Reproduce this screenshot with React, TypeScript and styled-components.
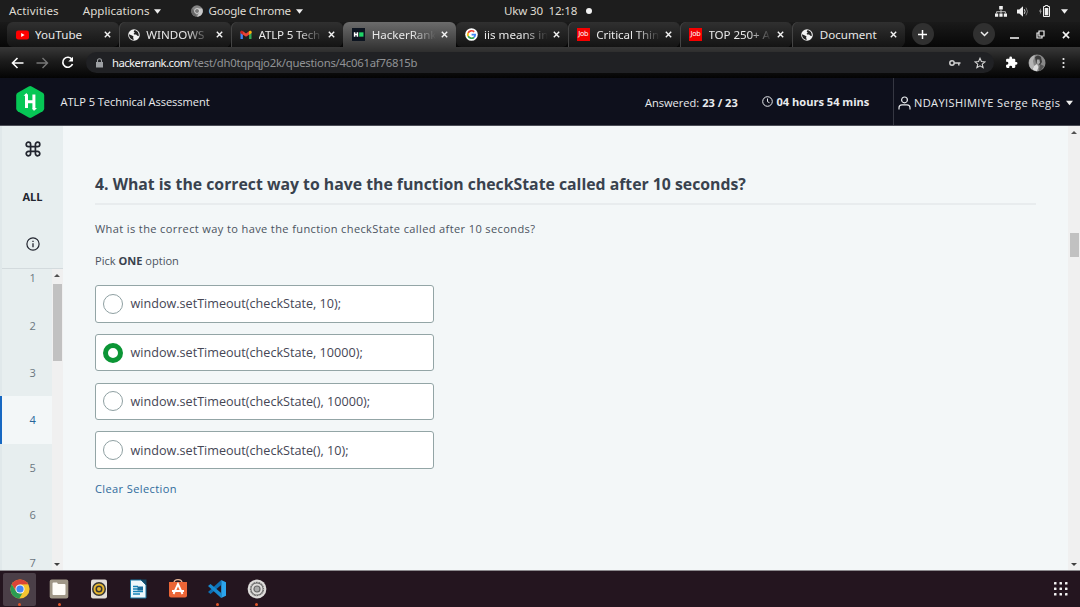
import React from "react";
import styled, { createGlobalStyle, css } from "styled-components";

const GlobalStyle = createGlobalStyle`
  * { box-sizing: border-box; }
  body { margin: 0; overflow: hidden; background: #f3f7f8; }
  svg { display: block; flex: none; }
`;

const Desktop = styled.div`
  width: 1080px;
  height: 607px;
  display: flex;
  flex-direction: column;
  overflow: hidden;
  font-family: "Open Sans", "Noto Sans", sans-serif;
`;

/* ---------- system top bar ---------- */
const TopBar = styled.div`
  height: 22px;
  flex: none;
  display: grid;
  grid-template-columns: 504px 1fr auto;
  align-items: center;
  background: #1d1d1d;
  color: #dfdbd2;
  font: 11.6px/22px "Noto Sans", sans-serif;
  white-space: pre;
`;
const MenuGroup = styled.div`
  display: flex;
  align-items: center;
  padding-left: 9px;
`;
const MenuItem = styled.div<{ $left?: number; $spacing?: number }>`
  display: flex;
  align-items: center;
  gap: 5px;
  height: 22px;
  margin-left: ${(p) => p.$left ?? 0}px;
  letter-spacing: ${(p) => p.$spacing ?? 0}px;
`;
const Clock = styled.div`
  display: flex;
  align-items: center;
  gap: 9px;
  letter-spacing: -0.2px;
  height: 20px;
`;
const Dot = styled.span`
  width: 6px;
  height: 6px;
  border-radius: 50%;
  background: #f2f2f2;
`;
const StatusIcons = styled.div`
  display: flex;
  align-items: center;
  gap: 10px;
  height: 20px;
  padding-right: 12px;
`;

/* ---------- browser tabs ---------- */
const TabStrip = styled.div`
  height: 25px;
  flex: none;
  display: flex;
  padding-left: 6.5px;
  background: linear-gradient(#1a1a1a, #070707);
`;
const TabItem = styled.div<{ $active?: boolean }>`
  width: 112.25px;
  flex: none;
  height: 25px;
  padding: 0 8px 0 9px;
  display: flex;
  align-items: center;
  color: #e8e8e8;
  border-radius: 6px;
  background: linear-gradient(#303030, #141414);
  & + & {
    box-shadow: inset 1px 0 #444;
    border-radius: 6px 6px 6px 0;
  }
  ${(p) =>
    p.$active &&
    css`
      &&& {
        background: linear-gradient(#6c6c6c, #383838);
        border-radius: 6px 6px 0 0;
        box-shadow: none;
      }
      &&& + div {
        border-radius: 6px;
        box-shadow: none;
      }
    `}
`;
const TabTitle = styled.span<{ $fade?: boolean; $spacing?: number }>`
  flex: 1;
  margin: 0 5px 0 6.5px;
  overflow: hidden;
  white-space: nowrap;
  font: 11.6px/24px "Noto Sans", sans-serif;
  letter-spacing: ${(p) => p.$spacing ?? 0}px;
  ${(p) =>
    p.$fade &&
    css`
      mask-image: linear-gradient(90deg, #000 62%, transparent 100%);
    `}
`;
const RoundButton = styled.div<{ $left: number }>`
  width: 22px;
  height: 22px;
  margin: 1px 0 0 ${(p) => p.$left}px;
  border-radius: 50%;
  display: grid;
  place-items: center;
  background: #303030;
`;
const WindowButtons = styled.div`
  display: flex;
  align-items: center;
  gap: 17px;
  margin-left: 15px;
  height: 25px;
`;

/* ---------- address bar ---------- */
const Toolbar = styled.div`
  height: 31px;
  flex: none;
  display: flex;
  align-items: center;
  padding: 0 9px 0 11px;
  background: linear-gradient(#383838, #1c1c1c 45%, #040404);
`;
const NavButtons = styled.div`
  display: flex;
  align-items: center;
  gap: 12px;
  width: 75px;
`;
const Omnibox = styled.div`
  width: 908px;
  height: 21px;
  border-radius: 11px;
  padding: 0 8px 0 9px;
  display: flex;
  align-items: center;
  background: #202124;
`;
const Url = styled.div`
  flex: 1;
  margin-left: 8px;
  color: #919396;
  font: 11.3px/20px "Noto Sans", sans-serif;
  letter-spacing: -0.23px;
  b { color: #f1f1f1; font-weight: 400; letter-spacing: -0.55px; }
`;
const OmniIcons = styled.div`
  display: flex;
  align-items: center;
  gap: 13px;
`;
const ExtIcons = styled.div`
  flex: 1;
  display: flex;
  align-items: center;
  padding-left: 11px;
  gap: 10px;
`;

/* ---------- assessment header ---------- */
const SiteHeader = styled.div`
  height: 48px;
  flex: none;
  display: flex;
  align-items: center;
  padding-left: 15px;
  background: #0e101c;
  border-bottom: 1px solid #4b4d56;
  color: #e9ebee;
  font-size: 11.07px;
  white-space: nowrap;
`;
const HeaderTitle = styled.div`
  margin-left: 15.5px;
  width: 584.5px;
  letter-spacing: -0.04px;
`;
const Answered = styled.div`
  width: 116.5px;
  padding-top: 1px;
  b { font-weight: 700; }
`;
const TimeLeft = styled.div`
  width: 131.5px;
  display: flex;
  align-items: center;
  gap: 4px;
  font-weight: 700;
`;
const UserMenu = styled.div`
  flex: 1;
  height: 47px;
  display: flex;
  align-items: center;
  padding: 2px 0 0 4px;
  border-left: 1px solid #353742;
  span { width: 152px; margin-left: 3px; letter-spacing: 0.38px; }
`;

/* ---------- page ---------- */
const Page = styled.div`
  flex: 1;
  min-height: 0;
  display: flex;
  background: #f3f7f8;
`;
const Sidebar = styled.div`
  width: 63px;
  display: flex;
  flex-direction: column;
  background: #e7eeef;
  border-left: 2px solid #e0e8ea;
`;
const SideTools = styled.div`
  height: 143px;
  flex: none;
  display: flex;
  flex-direction: column;
  align-items: center;
  color: #22252f;
  border-bottom: 1px solid #d3dadd;
`;
const SideTool = styled.div<{ $height: number }>`
  height: ${(p) => p.$height}px;
  display: grid;
  place-items: center;
  font-size: 11.07px;
  font-weight: 700;
`;
const QuestionNav = styled.div`
  flex: 1;
  min-height: 0;
  display: flex;
  margin-left: -2px;
`;
const NumberList = styled.div`
  width: 51.5px;
  overflow: hidden;
`;
const NumberItem = styled.div<{ $active?: boolean; $first?: boolean }>`
  height: 47.4px;
  margin-top: ${(p) => (p.$first ? -14.9 : 0)}px;
  padding-left: 12px;
  display: grid;
  place-items: center;
  font-size: 11.07px;
  color: #6b767f;
  border-left: 2px solid #e0e8ea;
  ${(p) =>
    p.$active &&
    css`
      background: #f3f7f8;
      border-left-color: #1768c2;
      color: #26659a;
    `}
`;
const Scrollbar = styled.div<{ $width: number; $gap: number; $thumb: number }>`
  width: ${(p) => p.$width}px;
  flex: none;
  display: flex;
  flex-direction: column;
  align-items: center;
  padding: 5px 0 4px;
  background: #f0f0f0;
  &::before {
    content: "";
    border: 3px solid transparent;
    border-top-width: 0;
    border-bottom-color: #505050;
  }
  i {
    width: 9px;
    height: ${(p) => p.$thumb}px;
    margin-top: ${(p) => p.$gap}px;
    background: #c1c1c1;
  }
  &::after {
    content: "";
    margin-top: auto;
    border: 3px solid transparent;
    border-bottom-width: 0;
    border-top-color: #404040;
  }
`;

const Question = styled.main`
  flex: 1;
  padding: 46px 31px 0 32px;
  color: #39424e;
`;
const QuestionTitle = styled.h1`
  margin: 0;
  height: 33px;
  width: 941px;
  border-bottom: 2px solid #e8ecee;
  font-size: 15.8px;
  line-height: 25px;
  font-weight: 700;
  white-space: nowrap;
`;
const Paragraph = styled.p<{ $top: number; $spacing?: number }>`
  margin: ${(p) => p.$top}px 0 0;
  font-size: 11.07px;
  letter-spacing: ${(p) => p.$spacing ?? 0}px;
  line-height: 18px;
  color: #4b5360;
  b { color: #39424e; }
`;
const Options = styled.div`
  margin-top: 15px;
  display: flex;
  flex-direction: column;
  gap: 11.3px;
  width: 339px;
`;
const Option = styled.label`
  height: 37.5px;
  display: flex;
  align-items: center;
  gap: 7.5px;
  padding-left: 7px;
  border: 1px solid #93a5a6;
  border-radius: 3px;
  background: #fff;
  font-size: 12.62px;
  color: #454655;
`;
const Radio = styled.span<{ $checked?: boolean }>`
  width: 20px;
  height: 20px;
  flex: none;
  border-radius: 50%;
  background: #fff;
  border: ${(p) => (p.$checked ? "5.5px solid #0b9535" : "1px solid #8fa0a2")};
`;
const ClearLink = styled.a`
  display: block;
  margin-top: 11px;
  font-size: 11.07px;
  letter-spacing: 0.37px;
  line-height: 18px;
  color: #2f6b9c;
`;

/* ---------- dock ---------- */
const Dock = styled.div`
  height: 37px;
  flex: none;
  display: flex;
  align-items: center;
  padding: 0 12px 0 3px;
  background: #24151f;
  border-top: 1px solid #8d8a8e;
`;
const DockItem = styled.div<{ $active?: boolean; $running?: boolean }>`
  width: 33px;
  height: 33px;
  margin-right: 6.5px;
  padding-top: 6px;
  display: flex;
  flex-direction: column;
  align-items: center;
  gap: 4px;
  border-radius: 2px;
  background: ${(p) => (p.$active ? "#4b3f48" : "transparent")};
  &::after {
    content: "";
    width: 3px;
    height: 3px;
    border-radius: 50%;
    background: ${(p) => (p.$running ? "#e2562a" : "transparent")};
  }
`;
const GridButton = styled.div`
  margin-left: auto;
`;

/* ---------- drawings ---------- */
const Caret = ({ w = 7, h = 5 }: { w?: number; h?: number }) => (
  <svg width={w} height={h} viewBox="0 0 7 5"><path d="M0 0.3h7L3.5 4.8z" fill="#eee" /></svg>
);
const CloseIcon = ({ size = 7 }: { size?: number }) => (
  <svg width={size} height={size} viewBox="0 0 7 7"><path d="M.8.8l5.4 5.4M6.2.8L.8 6.2" stroke="#f4f4f4" strokeWidth="1.4" /></svg>
);
const ChromeMono = () => (
  <svg width="12" height="12" viewBox="0 0 12 12">
    <circle cx="6" cy="6" r="5.8" fill="#858585" />
    <path d="M6 3.4h5.2A5.8 5.8 0 0 1 6 11.8L8.4 7z" fill="#c9c9c9" />
    <path d="M1 3.2L3.6 7 6 11.8A5.8 5.8 0 0 1 1 3.2z" fill="#686868" />
    <circle cx="6" cy="6" r="2.7" fill="#ddd" /><circle cx="6" cy="6" r="2" fill="#777" />
  </svg>
);
const NetworkIcon = () => (
  <svg width="12" height="11" viewBox="0 0 12 11" fill="#f0f0f0">
    <path d="M4.2 0h3.6v3.6H4.2zM0 7.5h3.2v3.2H0zM4.4 7.5h3.2v3.2H4.4zM8.8 7.5H12v3.2H8.8z" />
    <path d="M6 3.5v4M1.6 7.6V5.7h8.8v1.9" stroke="#d0d0d0" strokeWidth=".9" fill="none" />
  </svg>
);
const VolumeIcon = () => (
  <svg width="12" height="11" viewBox="0 0 12 11">
    <path d="M0 3.5h2.3L6 .3v10.4L2.3 7.5H0z" fill="#f0f0f0" />
    <path d="M7.3 3.2q1.5 2.3 0 4.6" stroke="#ddd" fill="none" /><path d="M9 1.6q3 3.9 0 7.8" stroke="#777" fill="none" />
  </svg>
);
const BatteryIcon = () => (
  <svg width="12" height="12" viewBox="0 0 12 12">
    <path d="M2 3L0 6.5h1.3L.8 9.5 2.8 5.700H1.500z" fill="#aaa" />
    <path d="M4.500 1.500h1.700V.5h2.600v1h1.700v10h-6z" fill="none" stroke="#eee" /><path d="M5.700 3h3.600v7.300H5.700z" fill="#eee" />
  </svg>
);
const YouTubeIcon = () => (
  <svg width="13" height="12" viewBox="0 0 13 12"><rect y="1.5" width="13" height="9" rx="2.2" fill="#f00" /><path d="M5.2 4v4l3.4-2z" fill="#fff" /></svg>
);
const GlobeIcon = () => (
  <svg width="12" height="12" viewBox="0 0 12 12">
    <circle cx="6" cy="6" r="5.8" fill="#f3f3f3" />
    <path d="M1 5.2l3 1.2 1.5 1.2-.4 1.2 .8 1.9C3 10.8 1 8.5 1 5.2zM6.3 1.2l-.6 1.5 1.1.8-1.2 1.2.5.9h2l1.2 1.2 1.5.1C11 3.5 9 1.2 6.3 1.2z" fill="#222" />
  </svg>
);
const GmailIcon = () => (
  <svg width="12" height="12" viewBox="0 0 12 12">
    <path d="M.5 3v7h2.4V5z" fill="#4285f4" /><path d="M11.5 3v7H9.1V5z" fill="#34a853" />
    <path d="M.5 2.7Q1.5 1 3 2.2l3 2.3 3-2.3q1.5-1.2 2.5.5V4L6 7.8.5 4z" fill="#ea4335" />
    <path d="M9.1 2.1q2.4-1 2.4 1V4L9.1 5.8z" fill="#fbbc04" /><path d="M.5 3.2q0-2 2.4-1.1v3.7L.5 4z" fill="#c5221f" />
  </svg>
);
const HackerTabIcon = () => (
  <svg width="13" height="13" viewBox="0 0 12 12"><rect width="12" height="12" fill="#0c1420" /><path d="M1.7 4h1.4v1.3h1.2V4h1.4v4H4.3V6.7H3.1V8H1.7z" fill="#fff" /><rect x="6.6" y="4" width="4" height="4" fill="#1fd467" /></svg>
);
const GoogleIcon = () => (
  <svg width="13" height="13" viewBox="0 0 13 13" fill="none" strokeWidth="1.7">
    <circle cx="6.5" cy="6.5" r="6.3" fill="#fff" />
    <path d="M9.2 3.9A3.7 3.7 0 0 0 3.2 4.9" stroke="#ea4335" /><path d="M3.2 4.9a3.7 3.7 0 0 0 0 3.3" stroke="#fbbc05" />
    <path d="M3.2 8.2a3.7 3.7 0 0 0 5.8 1.1" stroke="#34a853" /><path d="M9 9.3q1.2-1 1.2-2.6H6.6" stroke="#4285f4" />
  </svg>
);
const JobBadge = styled.span`
  width: 13px;
  height: 13px;
  flex: none;
  background: #f40000;
  color: #fff;
  text-align: center;
  font: 7px/13px "DejaVu Sans", sans-serif;
  letter-spacing: -0.3px;
`;
const KeyIcon = () => (
  <svg width="12" height="8" viewBox="0 0 12 8" fill="none" stroke="#d0d0d0" strokeWidth="1.5"><circle cx="3" cy="4" r="2.2" /><path d="M5.2 4H11.5M9.8 4v2.5" /></svg>
);
const StarIcon = () => (
  <svg width="12" height="12" viewBox="0 0 24 24" fill="none" stroke="#d6d6d6" strokeWidth="2.2"><path d="M12 2.5l2.8 6.6 7.2.6-5.5 4.7 1.7 7L12 17.7l-6.2 3.7 1.7-7L2 9.7l7.2-.6z" /></svg>
);
const PuzzleIcon = () => (
  <svg width="13" height="13" viewBox="0 0 24 24" fill="#fff"><path d="M20.5 11H19V7a2 2 0 0 0-2-2h-4V3.5a2.5 2.5 0 0 0-5 0V5H4a2 2 0 0 0-2 2v3.8h1.5a2.7 2.7 0 0 1 0 5.4H2V20a2 2 0 0 0 2 2h3.8v-1.5a2.7 2.7 0 0 1 5.4 0V22H17a2 2 0 0 0 2-2v-4h1.5a2.5 2.5 0 0 0 0-5z" /></svg>
);
const ProfilePhoto = () => (
  <svg width="18" height="18" viewBox="0 0 18 18">
    <circle cx="9" cy="9" r="8.5" fill="#888" /><path d="M1 9a8 8 0 0 1 6-7.7L5 7l1 5-2 3.5A8.500 8.500 0 0 1 1 9z" fill="#b5b5b5" />
    <path d="M7 3q3-3 6 0l1 5-2 3-4-2z" fill="#3c3c3c" /><path d="M9 5.5h2.5L12 9l-2 1.5L8.700 9z" fill="#aaa" />
    <path d="M6 12l3-2 1.5 3L9 17.3q-3-.3-4.5-2z" fill="#ddd" /><path d="M12 10l4 2-3 4.5-2 .7z" fill="#555" />
  </svg>
);
const HexLogo = () => (
  <svg width="30" height="32" viewBox="0 0 30 32">
    <path d="M13.7.5q1.5-.8 3 0l11 6.3q1.5.9 1.5 2.6v13.2q0 1.7-1.5 2.6l-11 6.3q-1.5.8-3 0l-11-6.3Q1.2 24.3 1.2 22.600V9.400q0-1.700 1.500-2.600z" fill="#06c755" />
    <path d="M10 8.500h3v5.800h4.400V8.500h3v15h-3v-6.300H13V22h-3z" fill="#fff" />
    <path d="M8.500 9.800L11.500 7l1.600 2.800zM22 22l-3.100 3-1.500-3z" fill="#fff" />
  </svg>
);
const ClockIcon = () => (
  <svg width="11" height="11" viewBox="0 0 11 11" fill="none" stroke="#e9ebee"><circle cx="5.5" cy="5.5" r="4.8" /><path d="M5.5 2.5v3.2l2 1" /></svg>
);
const UserIcon = () => (
  <svg width="13" height="14" viewBox="0 0 13 14" fill="none" stroke="#e9ebee" strokeWidth="1.2"><circle cx="6.5" cy="3.9" r="2.9" /><path d="M1 13.5v-1.7q0-2.9 3-2.9h5q3 0 3 2.9v1.7" /></svg>
);
const CommandIcon = () => (
  <svg width="16" height="16" viewBox="0 0 16 16" fill="none" stroke="#22252f" strokeWidth="1.7"><path d="M5.6 5.6h4.8v4.8H5.6zM5.6 5.6H3.4a2.2 2.2 0 1 1 2.2-2.2zM10.4 5.6V3.4a2.2 2.2 0 1 1 2.2 2.2zM10.4 10.4h2.2a2.2 2.2 0 1 1-2.2 2.2zM5.6 10.4v2.2a2.2 2.2 0 1 1-2.2-2.2z" /></svg>
);
const InfoIcon = () => (
  <svg width="14" height="14" viewBox="0 0 14 14" fill="none" stroke="#22252f" strokeWidth="1.2"><circle cx="7" cy="7" r="6.1" /><path d="M7 6.2v4M7 3.7v1.3" strokeWidth="1.3" /></svg>
);
const ChromeIcon = () => (
  <svg width="20" height="20" viewBox="0 0 20 20">
    <circle cx="10" cy="10" r="9.6" fill="#f4c430" />
    <path d="M1.7 5.2A9.6 9.6 0 0 1 18.3 5.3L10 5.6 6 12z" fill="#db4437" />
    <path d="M1.7 5.2L6 12.2l4 2.2 2.3.2-3 5A9.6 9.6 0 0 1 1.7 5.2z" fill="#2c9c52" />
    <circle cx="10" cy="10" r="4.6" fill="#f5f5f5" /><circle cx="10" cy="10" r="3.6" fill="#4285f4" />
  </svg>
);
const FilesIcon = () => (
  <svg width="20" height="20" viewBox="0 0 20 20"><rect x=".7" y=".5" width="18.6" height="19" rx="2" fill="#a09787" /><path d="M3.500 4.500q0-1 1-1H8l1 1.500h6.500q1 0 1 1v9q0 1-1 1h-11q-1 0-1-1z" fill="#fffdf8" /></svg>
);
const RhythmboxIcon = () => (
  <svg width="20" height="20" viewBox="0 0 20 20"><rect x="2" y=".5" width="16" height="19" rx="2" fill="#e2ddd7" /><circle cx="10" cy="10" r="7" fill="#353535" /><circle cx="10" cy="10" r="4.500" fill="none" stroke="#e5b52e" strokeWidth="2" /><circle cx="10" cy="10" r="2" fill="#e5b52e" /></svg>
);
const WriterIcon = () => (
  <svg width="20" height="20" viewBox="0 0 20 20"><path d="M2.500 1h10.500l5 5V19H2.500z" fill="#eef8fc" stroke="#1977a3" /><path d="M12.500 .5h6V6.500z" fill="#124865" /><path d="M5 7.500h5M5 10h5M5 12.500h10M5 15h7" stroke="#1583b8" strokeWidth="1.300" /><rect x="9.500" y="7.500" width="5.500" height="4" fill="#176b9b" /></svg>
);
const SoftwareIcon = () => (
  <svg width="20" height="20" viewBox="0 0 20 20"><path d="M6 4Q6 .7 10 .7T14 4" fill="none" stroke="#e9b697" strokeWidth="1.3" /><path d="M1 3h18v13.5q0 2-2 2H3q-2 0-2-2z" fill="#eb6536" /><path d="M5.5 15L10 5l4.5 10M4 12h12" fill="none" stroke="#fff" strokeWidth="1.9" /></svg>
);
const CodeIcon = () => (
  <svg width="20" height="20" viewBox="0 0 20 20"><path d="M14.2 1L19 3.3v13.4L14.2 19z" fill="#2ba4ed" /><path d="M14.2 1v5L3.5 15 1 13.1z" fill="#0d70b5" /><path d="M1 6.9L3.5 5l10.7 9v5z" fill="#178bd2" /></svg>
);
const SettingsIcon = () => (
  <svg width="20" height="20" viewBox="0 0 20 20"><circle cx="10" cy="10" r="9.400" fill="#dedcda" /><circle cx="10" cy="10" r="6.400" fill="none" stroke="#6a6a6a" strokeWidth="1.600" /><circle cx="10" cy="10" r="6.800" fill="none" stroke="#dedcda" strokeWidth="1" strokeDasharray="1 1.700" /><circle cx="10" cy="10" r="3" fill="#aaa" stroke="#666" strokeWidth="1.200" /></svg>
);

const tabs = [
  { title: "YouTube", icon: <YouTubeIcon />, spacing: 0.05 },
  { title: "WINDOWS", icon: <GlobeIcon />, fade: true },
  { title: "ATLP 5 Tech", icon: <GmailIcon />, fade: true, spacing: -0.2 },
  { title: "HackerRank", icon: <HackerTabIcon />, fade: true, active: true, spacing: -0.05 },
  { title: "iis means in", icon: <GoogleIcon />, fade: true },
  { title: "Critical Thin", icon: <JobBadge>Job</JobBadge>, fade: true, spacing: -0.1 },
  { title: "TOP 250+ A", icon: <JobBadge>Job</JobBadge>, fade: true, spacing: -0.1 },
  { title: "Document", icon: <GlobeIcon /> },
];
const answers = [
  "window.setTimeout(checkState, 10);",
  "window.setTimeout(checkState, 10000);",
  "window.setTimeout(checkState(), 10000);",
  "window.setTimeout(checkState(), 10);",
];

export default function App() {
  return (
    <Desktop>
      <GlobalStyle />
      <TopBar>
        <MenuGroup>
          <MenuItem $spacing={0.15}>Activities</MenuItem>
          <MenuItem $left={24}>Applications<Caret /></MenuItem>
          <MenuItem $left={30} $spacing={-0.25}><ChromeMono />Google Chrome<Caret /></MenuItem>
        </MenuGroup>
        <Clock>Ukw 30  12:18<Dot /></Clock>
        <StatusIcons><NetworkIcon /><VolumeIcon /><BatteryIcon /><Caret /></StatusIcons>
      </TopBar>

      <TabStrip>
        {tabs.map((t) => (
          <TabItem key={t.title} $active={t.active}>
            {t.icon}
            <TabTitle $fade={t.fade} $spacing={t.spacing}>{t.title}</TabTitle>
            <CloseIcon />
          </TabItem>
        ))}
        <RoundButton $left={7}>
          <svg width="9" height="9" viewBox="0 0 9 9"><path d="M4.5 0v9M0 4.5h9" stroke="#fff" strokeWidth="1.5" /></svg>
        </RoundButton>
        <RoundButton $left={39.5}>
          <svg width="9" height="6" viewBox="0 0 9 6"><path d="M1 1l3.500 3.500L8 1" fill="none" stroke="#eee" strokeWidth="1.5" /></svg>
        </RoundButton>
        <WindowButtons>
          <svg width="9" height="9" viewBox="0 0 9 9"><path d="M0 8h9" stroke="#eee" strokeWidth="1.6" /></svg>
          <svg width="9" height="9" viewBox="0 0 9 9" fill="none" stroke="#eee" strokeWidth="1.2"><path d="M3 1h5v5H3zM3 3H1v5h5V6" /></svg>
          <CloseIcon size={8} />
        </WindowButtons>
      </TabStrip>

      <Toolbar>
        <NavButtons>
          <svg width="13" height="12" viewBox="0 0 13 12" fill="none" stroke="#fff" strokeWidth="1.6"><path d="M12.5 6H1.5M6.5 1L1.5 6l5 5" /></svg>
          <svg width="13" height="12" viewBox="0 0 13 12" fill="none" stroke="#777" strokeWidth="1.4"><path d="M.5 6h11M6.5 1l5 5-5 5" /></svg>
          <svg width="13" height="13" viewBox="0 0 13 13" fill="none" stroke="#fff" strokeWidth="1.7"><path d="M11 3.5A5 5 0 1 0 11.5 8" /><path d="M12 .8v4.7H7.3z" fill="#fff" stroke="none" /></svg>
        </NavButtons>
        <Omnibox>
          <svg width="9" height="10" viewBox="0 0 9 10"><path d="M1 4h7v5.5H1z" fill="#9da0a3" /><path d="M2.5 4.5V2.8a2 2 0 0 1 4 0v1.7" fill="none" stroke="#9da0a3" strokeWidth="1.1" /></svg>
          <Url><b>hackerrank.com</b>/test/dh0tqpqjo2k/questions/4c061af76815b</Url>
          <OmniIcons><KeyIcon /><StarIcon /></OmniIcons>
        </Omnibox>
        <ExtIcons>
          <PuzzleIcon /><ProfilePhoto />
          <svg width="12" height="12" viewBox="0 0 12 12" fill="#eee"><circle cx="7.5" cy="2" r="1.1" /><circle cx="7.5" cy="6" r="1.1" /><circle cx="7.5" cy="10" r="1.1" /></svg>
        </ExtIcons>
      </Toolbar>

      <SiteHeader>
        <HexLogo />
        <HeaderTitle>ATLP 5 Technical Assessment</HeaderTitle>
        <Answered>Answered: <b>23 / 23</b></Answered>
        <TimeLeft><ClockIcon />04 hours 54 mins</TimeLeft>
        <UserMenu><UserIcon /><span>NDAYISHIMIYE Serge Regis</span><Caret w={7} h={6} /></UserMenu>
      </SiteHeader>

      <Page>
        <Sidebar>
          <SideTools>
            <SideTool $height={46}><CommandIcon /></SideTool>
            <SideTool $height={49}>ALL</SideTool>
            <SideTool $height={46}><InfoIcon /></SideTool>
          </SideTools>
          <QuestionNav>
            <NumberList>
              {[1, 2, 3, 4, 5, 6, 7].map((n) => (
                <NumberItem key={n} $first={n === 1} $active={n === 4}>{n}</NumberItem>
              ))}
            </NumberList>
            <Scrollbar $width={11.5} $gap={7} $thumb={77}><i /></Scrollbar>
          </QuestionNav>
        </Sidebar>
        <Question>
          <QuestionTitle>4. What is the correct way to have the function checkState called after 10 seconds?</QuestionTitle>
          <Paragraph $top={15} $spacing={0.365}>What is the correct way to have the function checkState called after 10 seconds?</Paragraph>
          <Paragraph $top={14}>Pick <b>ONE</b> option</Paragraph>
          <Options>
            {answers.map((a, i) => (
              <Option key={a}><Radio $checked={i === 1} />{a}</Option>
            ))}
          </Options>
          <ClearLink>Clear Selection</ClearLink>
        </Question>
        <Scrollbar $width={12} $gap={99} $thumb={24}><i /></Scrollbar>
      </Page>

      <Dock>
        <DockItem $active $running><ChromeIcon /></DockItem>
        <DockItem $running><FilesIcon /></DockItem>
        <DockItem><RhythmboxIcon /></DockItem>
        <DockItem><WriterIcon /></DockItem>
        <DockItem><SoftwareIcon /></DockItem>
        <DockItem $running><CodeIcon /></DockItem>
        <DockItem $running><SettingsIcon /></DockItem>
        <GridButton>
          <svg width="14" height="14" viewBox="0 0 14 14" fill="#f2f2f2">
            {[0, 5.5, 11].map((y) => [0, 5.5, 11].map((x) => <rect key={`${x}-${y}`} x={x} y={y} width="2.5" height="2.5" rx=".5" />))}
          </svg>
        </GridButton>
      </Dock>
    </Desktop>
  );
}
